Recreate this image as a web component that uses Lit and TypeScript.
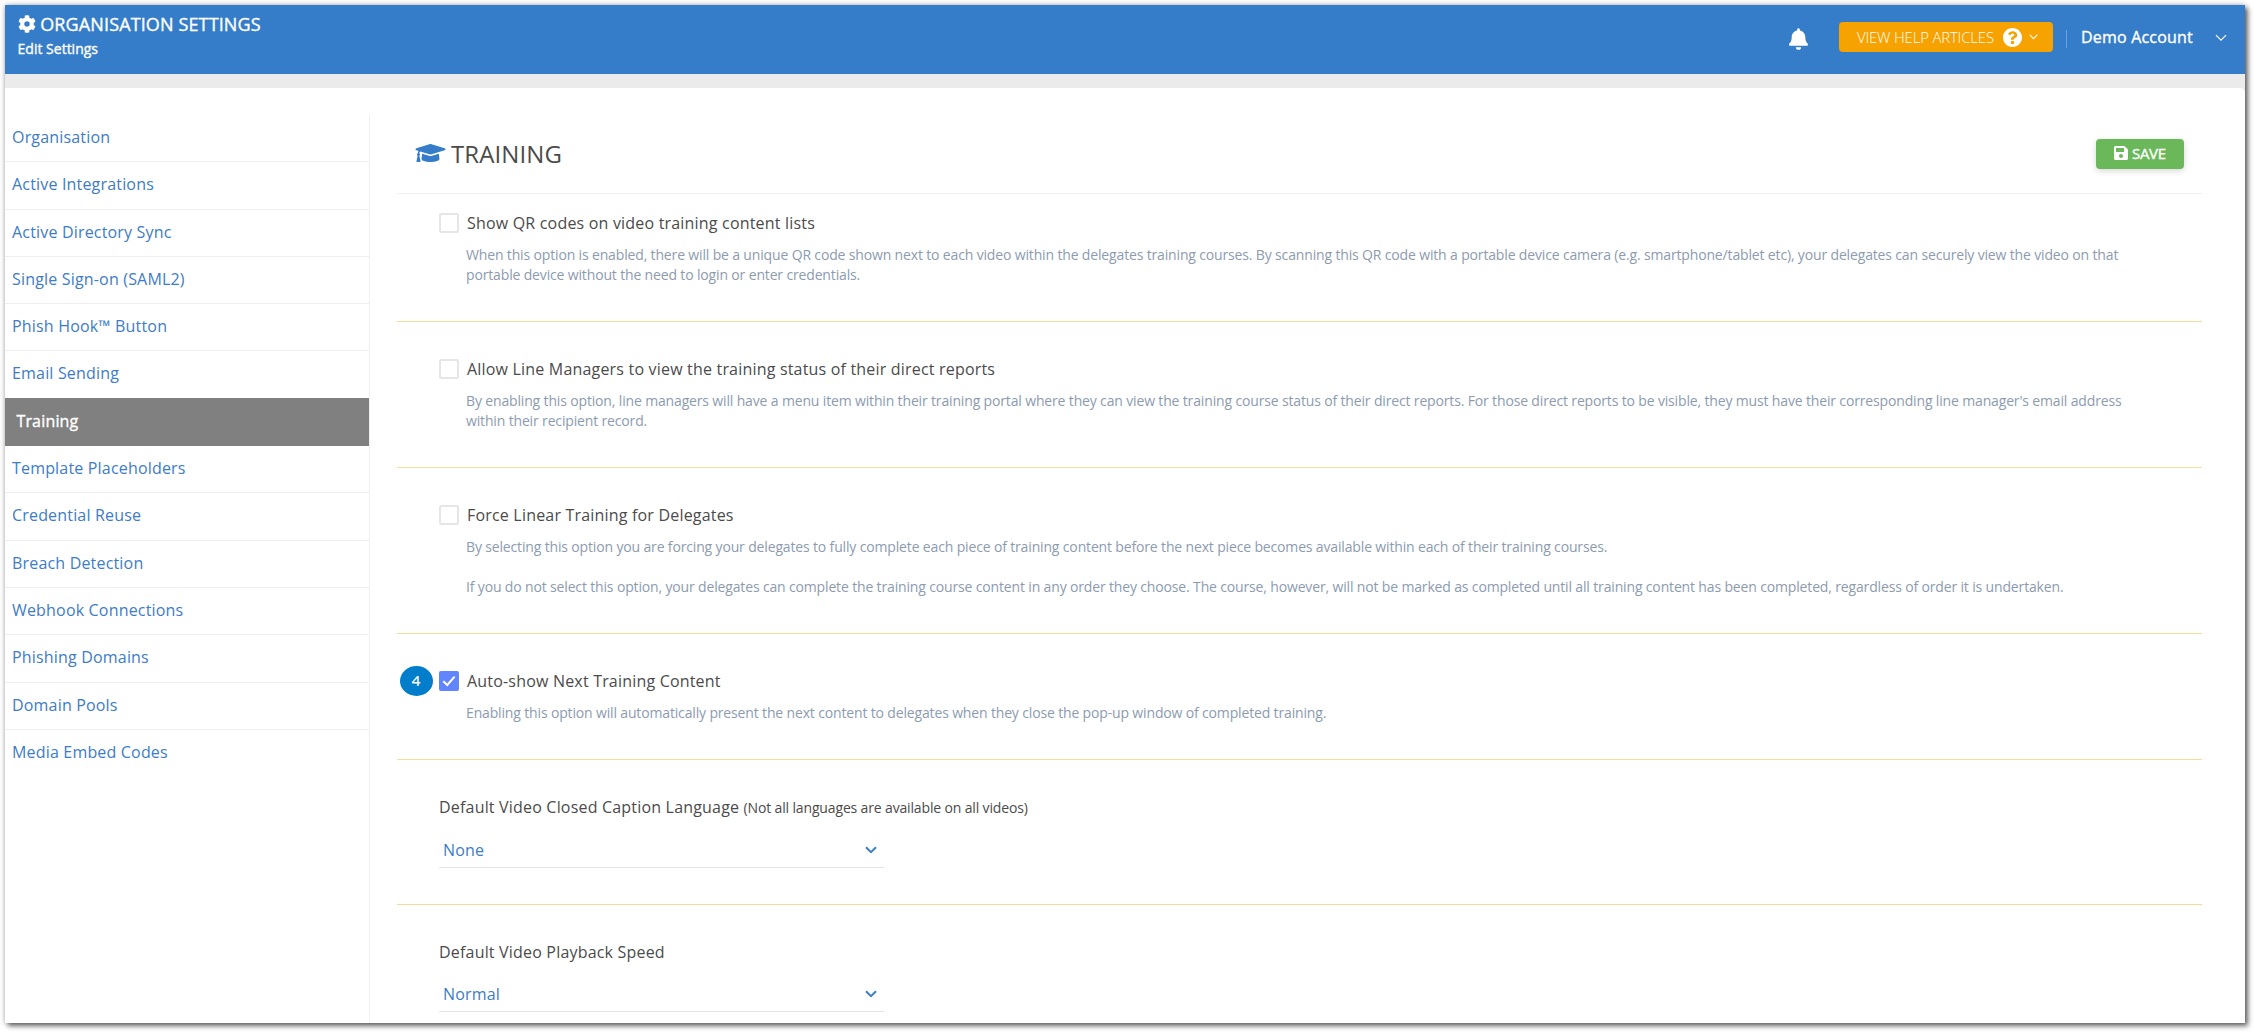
import { LitElement, html, css, svg, nothing } from "lit";
import { customElement, state } from "lit/decorators.js";
import { classMap } from "lit/directives/class-map.js";

const COG = "M487.4 315.7l-42.6-24.6c4.3-23.2 4.3-47 0-70.2l42.6-24.6c4.9-2.8 7.1-8.6 5.5-14-11.1-35.6-30-67.8-54.7-94.6-3.8-4.1-10-5.1-14.8-2.3L380.8 110c-17.9-15.4-38.5-27.3-60.8-35.1V25.8c0-5.6-3.9-10.5-9.4-11.7-36.7-8.2-74.3-7.8-109.2 0-5.5 1.2-9.4 6.1-9.4 11.7V75c-22.2 7.9-42.8 19.8-60.8 35.1L88.7 85.5c-4.9-2.8-11-1.9-14.8 2.3-24.7 26.7-43.6 58.9-54.7 94.6-1.7 5.4.6 11.2 5.5 14L67.3 221c-4.3 23.2-4.3 47 0 70.2l-42.6 24.6c-4.9 2.8-7.1 8.6-5.5 14 11.1 35.6 30 67.8 54.7 94.6 3.8 4.1 10 5.1 14.8 2.3l42.6-24.6c17.9 15.4 38.5 27.3 60.8 35.1v49.2c0 5.6 3.9 10.5 9.4 11.7 36.7 8.2 74.3 7.8 109.2 0 5.5-1.2 9.4-6.1 9.4-11.7v-49.2c22.2-7.9 42.8-19.8 60.8-35.1l42.6 24.6c4.9 2.8 11 1.9 14.8-2.3 24.7-26.7 43.6-58.9 54.7-94.6 1.5-5.5-.7-11.3-5.6-14.1zM256 336c-44.1 0-80-35.9-80-80s35.9-80 80-80 80 35.9 80 80-35.9 80-80 80z";
const BELL = "M224 512c35.32 0 63.97-28.65 63.97-64H160.03c0 35.35 28.65 64 63.97 64zm215.39-149.71c-19.32-20.76-55.47-51.99-55.47-154.29 0-77.7-54.48-139.9-127.94-155.16V32c0-17.67-14.32-32-31.98-32s-31.98 14.33-31.98 32v20.84C118.56 68.1 64.08 130.3 64.08 208c0 102.3-36.15 133.53-55.47 154.29-6 6.45-8.66 14.16-8.61 21.71.11 16.4 12.98 32 32.1 32h383.8c19.12 0 32-15.6 32.1-32 .05-7.55-2.61-15.27-8.61-21.71z";
const HELP = "M504 256c0 136.997-111.043 248-248 248S8 392.997 8 256C8 119.083 119.043 8 256 8s248 111.083 248 248zM262.655 90c-54.497 0-89.255 22.957-116.549 63.758-3.536 5.286-2.353 12.415 2.715 16.258l34.699 26.31c5.205 3.947 12.621 3.008 16.665-2.122 17.864-22.658 30.113-35.797 57.303-35.797 20.429 0 45.698 13.148 45.698 32.958 0 14.976-12.363 22.667-32.534 33.976C247.128 238.528 216 254.941 216 296v4c0 6.627 5.373 12 12 12h56c6.627 0 12-5.373 12-12v-1.333c0-28.462 83.186-29.647 83.186-106.667 0-58.002-60.165-102-116.531-102zM256 338c-25.365 0-46 20.635-46 46 0 25.364 20.635 46 46 46s46-20.636 46-46c0-25.365-20.635-46-46-46z";
const CAP = "M622.34 153.2L343.4 67.5c-15.2-4.67-31.6-4.67-46.79 0L17.66 153.2c-23.54 7.23-23.54 38.36 0 45.59l48.63 14.94c-10.67 13.19-17.23 29.28-17.88 46.9C38.78 266.15 32 276.11 32 288c0 10.78 5.68 19.85 13.86 25.65L20.33 428.53C18.11 438.52 25.71 448 35.94 448h56.11c10.24 0 17.84-9.48 15.62-19.47L82.14 313.65C90.32 307.85 96 298.78 96 288c0-11.57-6.47-21.25-15.66-26.87.76-15.02 8.44-28.3 20.69-36.72L296.6 284.5c9.06 2.78 26.44 6.25 46.79 0l278.95-85.7c23.55-7.24 23.55-38.36 0-45.6zM352.79 315.09c-28.53 8.76-52.84 3.92-65.59 0l-145.02-44.55L128 384c0 35.35 85.96 64 192 64s192-28.65 192-64l-14.18-113.47-145.03 44.56z";
const SAVE = "M433.941 129.941l-83.882-83.882A48 48 0 0 0 316.118 32H48C21.49 32 0 53.49 0 80v352c0 26.51 21.49 48 48 48h352c26.51 0 48-21.49 48-48V163.882a48 48 0 0 0-14.059-33.941zM224 416c-35.346 0-64-28.654-64-64 0-35.346 28.654-64 64-64s64 28.654 64 64c0 35.346-28.654 64-64 64zm96-304.52V212c0 6.627-5.373 12-12 12H76c-6.627 0-12-5.373-12-12V108c0-6.627 5.373-12 12-12h228.52c3.183 0 6.235 1.264 8.485 3.515l3.48 3.48A11.996 11.996 0 0 1 320 111.48z";

const glyph = (cls: string, box: string, d: string) =>
  html`<svg class=${cls} viewBox=${box} aria-hidden="true">${svg`<path fill="currentColor" d=${d}></path>`}</svg>`;

const chevron = (cls: string, stroke: number) =>
  html`<svg class=${cls} viewBox="0 0 12 8" aria-hidden="true">${svg`<path fill="none" stroke="currentColor" stroke-width=${stroke} d="M1 1.2L6 6.2L11 1.2"></path>`}</svg>`;

const NAV = [
  "Organisation",
  "Active Integrations",
  "Active Directory Sync",
  "Single Sign-on (SAML2)",
  "Phish Hook™ Button",
  "Email Sending",
  "Training",
  "Template Placeholders",
  "Credential Reuse",
  "Breach Detection",
  "Webhook Connections",
  "Phishing Domains",
  "Domain Pools",
  "Media Embed Codes",
];

interface Option {
  label: string;
  checked: boolean;
  badge?: string;
  lines: string[];
}

const OPTIONS: Option[] = [
  {
    label: "Show QR codes on video training content lists",
    checked: false,
    lines: [
      "When this option is enabled, there will be a unique QR code shown next to each video within the delegates training courses. By scanning this QR code with a portable device camera (e.g. smartphone/tablet etc), your delegates can securely view the video on that",
      "portable device without the need to login or enter credentials.",
    ],
  },
  {
    label: "Allow Line Managers to view the training status of their direct reports",
    checked: false,
    lines: [
      "By enabling this option, line managers will have a menu item within their training portal where they can view the training course status of their direct reports. For those direct reports to be visible, they must have their corresponding line manager's email address",
      "within their recipient record.",
    ],
  },
  {
    label: "Force Linear Training for Delegates",
    checked: false,
    lines: [
      "By selecting this option you are forcing your delegates to fully complete each piece of training content before the next piece becomes available within each of their training courses.",
      "",
      "If you do not select this option, your delegates can complete the training course content in any order they choose. The course, however, will not be marked as completed until all training content has been completed, regardless of order it is undertaken.",
    ],
  },
  {
    label: "Auto-show Next Training Content",
    checked: true,
    badge: "4",
    lines: [
      "Enabling this option will automatically present the next content to delegates when they close the pop-up window of completed training.",
    ],
  },
];

const SELECTS = [
  { label: "Default Video Closed Caption Language", note: "(Not all languages are available on all videos)", value: "None" },
  { label: "Default Video Playback Speed", note: "", value: "Normal" },
];

@customElement("app-root")
export class AppRoot extends LitElement {
  @state() private active = "Training";
  @state() private checks = OPTIONS.map((o) => o.checked);

  static styles = css`
    :host {
      display: block;
      box-sizing: border-box;
      height: 1032px;
      padding: 5px 9px 9px 5px;
      overflow: hidden;
      background: #fff;
      font-family: "Open Sans", "Noto Sans", sans-serif;
      color: #4b4b4b;
    }
    * { box-sizing: border-box; }
    svg { display: block; flex: none; }
    .window {
      display: flex;
      flex-direction: column;
      height: 1018px;
      background: #ebebeb;
      box-shadow: 0 0 5px rgba(0, 0, 0, 0.3), 3px 3px 5px rgba(0, 0, 0, 0.55);
    }
    .header {
      display: flex;
      justify-content: space-between;
      height: 69px;
      flex: none;
      padding: 0 18px 0 12.6px;
      background: #367dc9;
      color: #fff;
    }
    .heading { padding-top: 7px; -webkit-text-stroke: 0.35px currentColor; }
    .heading-title {
      display: flex;
      align-items: center;
      gap: 4.6px;
      height: 24px;
      font-size: 18px;
      letter-spacing: 0.13px;
      white-space: nowrap;
    }
    .cog { width: 18px; height: 18px; }
    .heading-sub { font-size: 14px; line-height: 20px; padding-top: 3px; }
    .tools { display: flex; align-items: flex-start; padding-top: 17px; }
    .bell { width: 19px; height: 22px; margin: 6px 31px 0 0; }
    .help {
      display: flex;
      align-items: center;
      width: 214px;
      height: 30px;
      padding-left: 18px;
      border-radius: 4px;
      background: #f6a200;
      font-size: 15px;
      font-weight: 300;
      white-space: nowrap;
    }
    .help-text { width: 145.5px; letter-spacing: -0.2px; margin-top: -1px; }
    .help-icon { width: 19px; height: 19px; }
    .help-chevron { width: 9px; height: 6px; margin-left: 7px; }
    .divider { width: 1px; height: 18px; margin: 8px 14px 0 13px; background: #6f9fd6; }
    .account {
      width: 134px;
      line-height: 30px;
      font-size: 16px;
      letter-spacing: 0.2px;
      white-space: nowrap;
      -webkit-text-stroke: 0.35px currentColor;
    }
    .account-chevron { width: 12px; height: 8px; margin-top: 12px; }
    .card {
      display: flex;
      flex: 1;
      min-height: 0;
      margin-top: 14px;
      padding-top: 27px;
      overflow: hidden;
      background: #fff;
      border-radius: 0 5px 0 0;
    }
    .nav { width: 365px; flex: none; border-right: 1px solid #f0f0f0; }
    .nav-item {
      display: block;
      height: 47.3px;
      padding: 0 0 0 7px;
      border-bottom: 1px solid #efefef;
      color: #3d7cc9;
      font-size: 16px;
      letter-spacing: 0.18px;
      line-height: 45.5px;
      white-space: nowrap;
      cursor: pointer;
    }
    .nav-item:last-child { border-bottom: 0; }
    .nav-item.active {
      height: 48.3px;
      margin-top: -1px;
      padding: 1px 0 0 11.4px;
      background: #808080;
      border-color: #808080;
      color: #fff;
      -webkit-text-stroke: 0.35px currentColor;
    }
    .content { flex: 1; min-width: 0; margin: 0 43px 0 27px; }
    .content-head {
      display: flex;
      justify-content: space-between;
      align-items: flex-start;
      height: 79px;
      padding: 24px 18px 0 18px;
      border-bottom: 1px solid #f0f0f0;
    }
    .title { display: flex; align-items: center; gap: 5px; height: 28px; font-size: 24px; letter-spacing: 0.1px; }
    .cap { width: 31px; height: 24px; color: #367dc9; }
    .save {
      display: flex;
      align-items: center;
      gap: 4px;
      width: 88px;
      height: 30px;
      padding: 0 0 2px 18px;
      border: 0;
      border-radius: 4px;
      background: #6bb85a;
      box-shadow: 0 2px 6px rgba(0, 0, 0, 0.16);
      color: #fff;
      font: 400 15px "Open Sans", sans-serif;
      letter-spacing: -0.3px;
      -webkit-text-stroke: 0.35px currentColor;
    }
    .save-icon { width: 14px; height: 16px; }
    .section { border-bottom: 1px solid #f7dc9c; padding: 37px 0 36px 42px; }
    .section.first { padding-top: 19px; padding-bottom: 35.9px; }
    .row { display: flex; align-items: center; height: 20px; position: relative; }
    .check {
      width: 20px;
      height: 20px;
      flex: none;
      margin-right: 8px;
      border: 2px solid #e6e6e6;
      border-radius: 2px;
      background: #fff;
    }
    .check.on { border-color: #6284ff; background: #6284ff; color: #fff; }
    .tick { width: 16px; height: 16px; }
    .label { font-size: 16px; line-height: 20px; letter-spacing: 0.19px; white-space: nowrap; }
    .desc {
      margin: 11.7px 0 0 27px;
      color: #8c9bb0;
      font-size: 14px;
      letter-spacing: -0.153px;
      line-height: 20.2px;
      white-space: nowrap;
    }
    .line { height: 20.2px; }
    .badge {
      position: absolute;
      left: -39.5px;
      top: -5px;
      width: 33px;
      height: 30px;
      border-radius: 50%;
      background: #007dcb;
      color: #fff;
      font-family: "Noto Sans", sans-serif;
      font-size: 15px;
      line-height: 29px;
      text-align: center;
      -webkit-text-stroke: 0.2px currentColor;
    }
    .pick { height: 145px; padding: 36.7px 42px 0; border-bottom: 1px solid #f9d998; }
    .pick:last-child { border-bottom: 0; }
    .note { font-size: 14px; letter-spacing: -0.15px; }
    .select {
      display: flex;
      justify-content: space-between;
      align-items: center;
      width: 445px;
      height: 38px;
      margin-top: 12.6px;
      padding: 1.4px 7.5px 0 4px;
      border-bottom: 1px solid #e4e4e4;
      color: #3d7cc9;
      font-size: 16px;
      letter-spacing: 0.19px;
    }
    .select-chevron { width: 12px; height: 8px; }
  `;

  private toggle(i: number) {
    this.checks = this.checks.map((c, k) => (k === i ? !c : c));
  }

  render() {
    return html`
      <div class="window">
        <header class="header">
          <div class="heading">
            <div class="heading-title">${glyph("cog", "0 0 512 512", COG)}<span>ORGANISATION SETTINGS</span></div>
            <div class="heading-sub">Edit Settings</div>
          </div>
          <div class="tools">
            ${glyph("bell", "0 0 448 512", BELL)}
            <div class="help">
              <span class="help-text">VIEW HELP ARTICLES</span>
              ${glyph("help-icon", "8 8 496 496", HELP)} ${chevron("help-chevron", 1.4)}
            </div>
            <span class="divider"></span>
            <span class="account">Demo Account</span>
            ${chevron("account-chevron", 1.2)}
          </div>
        </header>
        <main class="card">
          <nav class="nav">
            ${NAV.map(
              (n) => html`<a class=${classMap({ "nav-item": true, active: n === this.active })} @click=${() => (this.active = n)}>${n}</a>`
            )}
          </nav>
          <div class="content">
            <div class="content-head">
              <div class="title">${glyph("cap", "0 0 640 512", CAP)}<span class="title-text">TRAINING</span></div>
              <button class="save">${glyph("save-icon", "0 0 448 512", SAVE)}<span>SAVE</span></button>
            </div>
            ${OPTIONS.map(
              (o, i) => html`
                <section class=${classMap({ section: true, first: i === 0 })}>
                  <div class="row" @click=${() => this.toggle(i)}>
                    ${o.badge ? html`<span class="badge">${o.badge}</span>` : nothing}
                    <span class=${classMap({ check: true, on: this.checks[i] })}>
                      ${this.checks[i]
                        ? html`<svg class="tick" viewBox="0 0 16 16">${svg`<path fill="none" stroke="currentColor" stroke-width="2" d="M2.3 8.3L6.3 12L13.6 3.6"></path>`}</svg>`
                        : nothing}
                    </span>
                    <span class="label">${o.label}</span>
                  </div>
                  <div class="desc">${o.lines.map((l) => html`<div class="line">${l}</div>`)}</div>
                </section>
              `
            )}
            ${SELECTS.map(
              (s) => html`
                <section class="pick">
                  <div class="label">${s.label} ${s.note ? html`<span class="note">${s.note}</span>` : nothing}</div>
                  <div class="select"><span>${s.value}</span>${chevron("select-chevron", 2)}</div>
                </section>
              `
            )}
          </div>
        </main>
      </div>
    `;
  }
}
